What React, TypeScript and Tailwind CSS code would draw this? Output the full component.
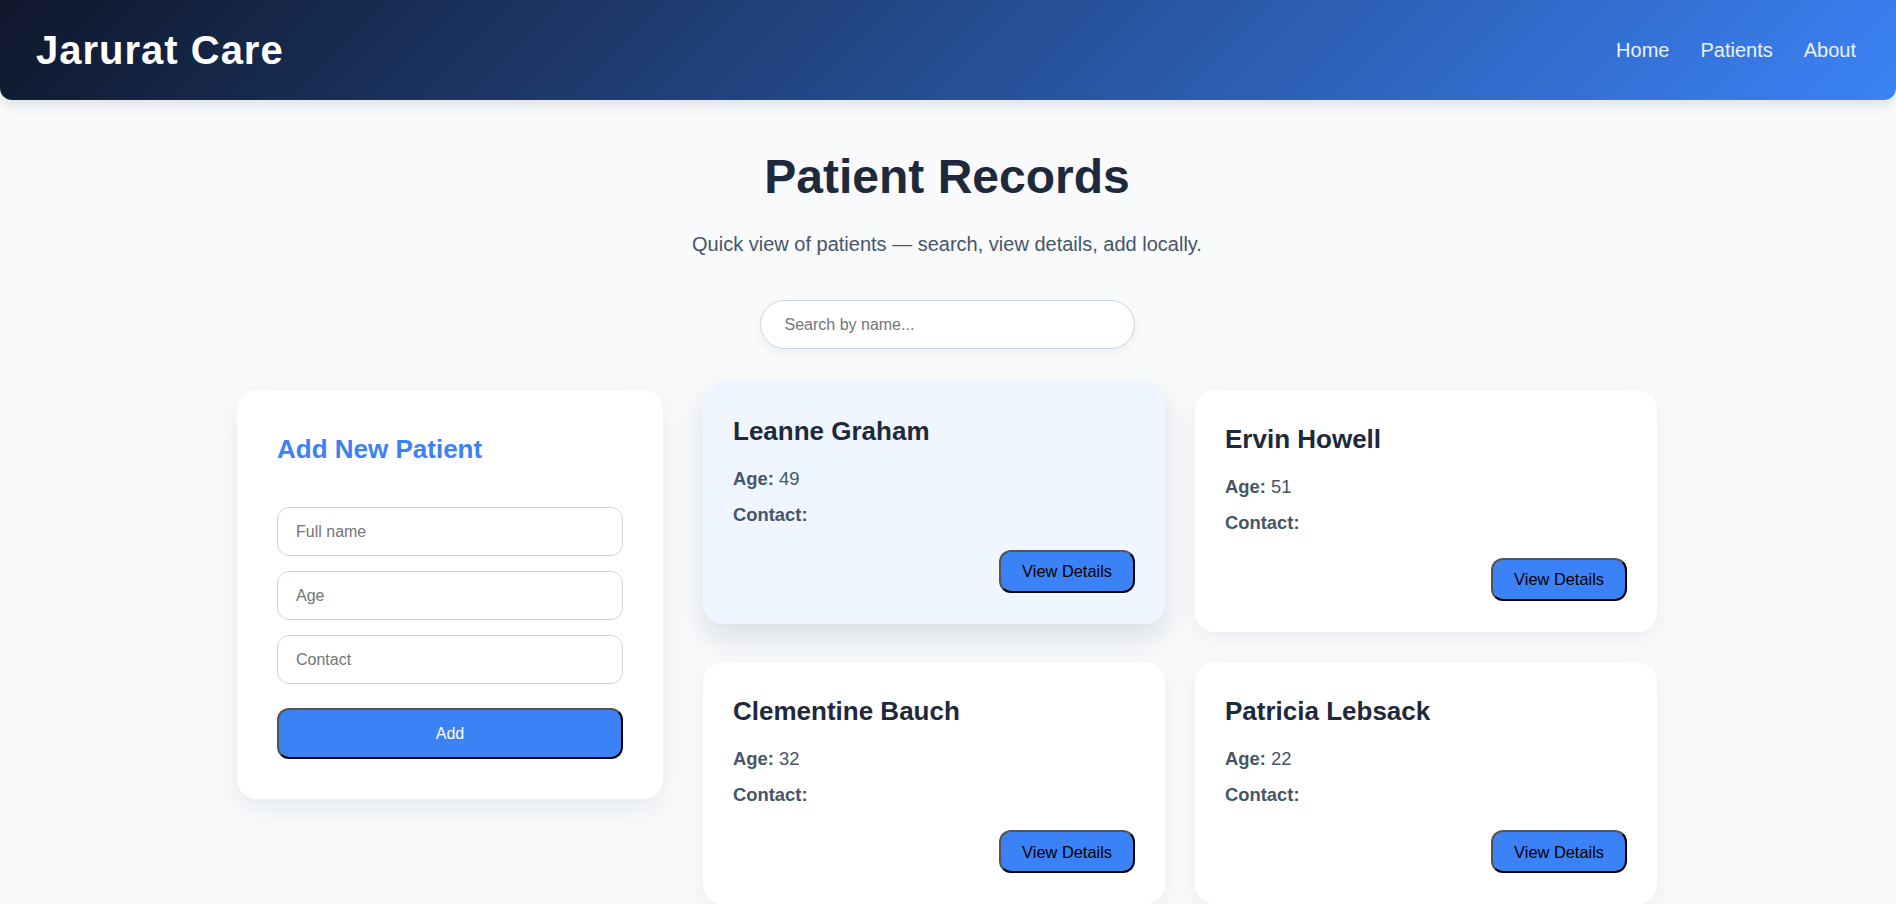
import { useState } from "react";

type Patient = { id: number; name: string; age: number; contact: string };

const initialPatients: Patient[] = [
  { id: 1, name: "Leanne Graham", age: 49, contact: "" },
  { id: 2, name: "Ervin Howell", age: 51, contact: "" },
  { id: 3, name: "Clementine Bauch", age: 32, contact: "" },
  { id: 4, name: "Patricia Lebsack", age: 22, contact: "" },
];

function PatientCard({ patient, active }: { patient: Patient; active?: boolean }) {
  return (
    <div
      className={
        active
          ? "rounded-[20px] bg-[#eff6ff] px-[30px] pt-[30px] pb-[31px] -translate-y-2 shadow-[0_14px_30px_rgba(15,23,42,0.12)]"
          : "rounded-[20px] bg-white px-[30px] pt-[30px] pb-[31px] shadow-[0_6px_22px_rgba(15,23,42,0.06)]"
      }
    >
      <h3 className="text-[26px] font-bold text-[#1e293b]">{patient.name}</h3>
      <p className="mt-[14px] text-[18.4px] text-[#475569]">
        <strong>Age:</strong> {patient.age}
      </p>
      <p className="mt-[8px] text-[18.4px] text-[#475569]">
        <strong>Contact:</strong> {patient.contact}
      </p>
      <div className="mt-[22px] flex justify-end">
        <button className="h-[43px] rounded-xl border-2 border-black [border-style:outset] bg-[#3b82f6] px-[21px] text-[16.4px] text-black">
          View Details
        </button>
      </div>
    </div>
  );
}

export default function App() {
  const [patients] = useState<Patient[]>(initialPatients);
  const [query, setQuery] = useState("");

  const shown = patients.filter((p) =>
    p.name.toLowerCase().includes(query.toLowerCase())
  );

  return (
    <div className="min-h-screen bg-[#f8fafc] font-['Liberation_Sans',Arial,sans-serif]">
      {/* Top bar */}
      <header className="flex h-[100px] items-center justify-between rounded-b-xl bg-[linear-gradient(135deg,#0f172a,#3b82f6)] pl-9 pr-10 shadow-[0_4px_14px_rgba(15,23,42,0.12)]">
        <h1 className="text-[40px] font-bold tracking-[1px] text-white">Jarurat Care</h1>
        <nav className="flex gap-[31px] text-[20px] text-white/90">
          <a href="#">Home</a>
          <a href="#">Patients</a>
          <a href="#">About</a>
        </nav>
      </header>

      <main className="pt-[41px] pr-[2px] pb-10">
        <h2 className="text-center text-[48px] font-bold text-[#1e293b]">Patient Records</h2>
        <p className="mt-4 text-center text-[20px] text-[#475569]">
          Quick view of patients — search, view details, add locally.
        </p>

        <div className="mt-[41px] flex justify-center">
          <input
            value={query}
            onChange={(e) => setQuery(e.target.value)}
            placeholder="Search by name..."
            className="h-[49px] w-[375px] rounded-full border border-[#cbd5e1] bg-white px-6 text-[16px] outline-none shadow-[0_4px_12px_rgba(15,23,42,0.05)] placeholder:text-[#757575]"
          />
        </div>

        <div className="mx-auto mt-[41px] flex w-[1420px] items-start gap-10">
          {/* Add form */}
          <aside className="w-[426px] shrink-0 rounded-[20px] bg-white p-10 shadow-[0_10px_28px_rgba(15,23,42,0.07)]">
            <h2 className="mb-[38px] text-[26px] font-bold text-[#3b82f6]">Add New Patient</h2>
            <div className="flex flex-col gap-[15px]">
              <input
                placeholder="Full name"
                className="h-[49px] rounded-xl border border-[#cbd5e1] bg-white px-[18px] text-[16px] outline-none placeholder:text-[#757575]"
              />
              <input
                placeholder="Age"
                className="h-[49px] rounded-xl border border-[#cbd5e1] bg-white px-[18px] text-[16px] outline-none placeholder:text-[#757575]"
              />
              <input
                placeholder="Contact"
                className="h-[49px] rounded-xl border border-[#cbd5e1] bg-white px-[18px] text-[16px] outline-none placeholder:text-[#757575]"
              />
            </div>
            <button className="mt-6 h-[51px] w-full rounded-xl border-2 border-black [border-style:outset] bg-[#3b82f6] text-[16px] text-white">
              Add
            </button>
          </aside>

          {/* Patient list */}
          <div className="grid flex-1 grid-cols-2 gap-[30px]">
            {shown.map((p, i) => (
              <PatientCard key={p.id} patient={p} active={i === 0} />
            ))}
          </div>
        </div>
      </main>
    </div>
  );
}
